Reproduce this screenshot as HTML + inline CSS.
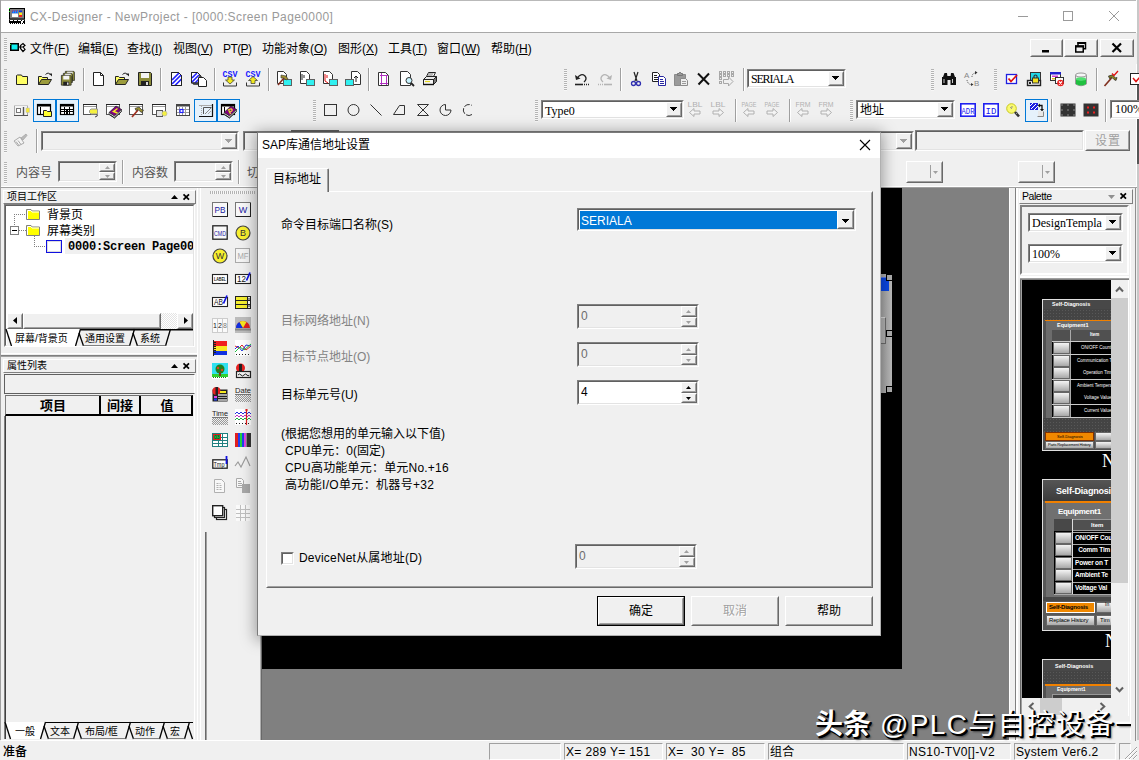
<!DOCTYPE html>
<html lang="zh-CN">
<head>
<meta charset="utf-8">
<title>CX-Designer</title>
<style>
*{box-sizing:border-box;margin:0;padding:0}
html,body{width:1139px;height:760px;overflow:hidden;background:#f0f0f0}
body{position:relative;font-family:"Liberation Sans","Noto Sans CJK SC",sans-serif;font-size:12px;color:#000}
.a{position:absolute}
.t{position:absolute;white-space:nowrap;line-height:16px}
u{text-decoration:underline;text-underline-offset:1px}
.sunk{position:absolute;border:1px solid;border-color:#808080 #fff #fff #808080;background:#fff}
.sunk:before{content:"";position:absolute;left:0;top:0;right:0;bottom:0;border:1px solid;border-color:#606060 #e3e3e3 #e3e3e3 #606060}
.sunk.dis{background:#f0f0f0}
.btn3{position:absolute;background:#f0f0f0;border:1px solid;border-color:#fff #696969 #696969 #fff}
.btn3:before{content:"";position:absolute;left:0;top:0;right:0;bottom:0;border:1px solid;border-color:#f0f0f0 #a0a0a0 #a0a0a0 #f0f0f0}
.sep{position:absolute;width:2px;border-left:1px solid #a0a0a0;border-right:1px solid #fff}
.grip{position:absolute;width:3px;background:repeating-linear-gradient(to bottom,#b4b4b4 0,#b4b4b4 1px,#f8f8f8 1px,#f8f8f8 2px)}
.hl{position:absolute;background:#e5f1fb;border:1px solid #0078d7}
svg{position:absolute;overflow:visible}
</style>
</head>
<body>
<div class="a" style="left:0px;top:0px;width:1139px;height:32px;background:#fff"></div>
<div class="a" style="left:0px;top:32px;width:1139px;height:1px;background:#a8a8a8"></div>
<div class="a" style="left:0px;top:0px;width:1139px;height:1px;background:#b9b9b9"></div>
<div class="a" style="left:0px;top:0px;width:1px;height:760px;background:#a0a0a0"></div>
<div class="a" style="left:1136px;top:0px;width:1px;height:760px;background:#fff"></div>
<div class="a" style="left:1137px;top:0px;width:2px;height:760px;background:#c8c8c8"></div>
<div class="a" style="left:1137px;top:84px;width:2px;height:80px;background:#555"></div>
<svg style="left:9px;top:8px" width="16" height="16" viewBox="0 0 16 16" ><rect x="0" y="0" width="16" height="11.500" fill="#000"/><rect x="1" y="1" width="14" height="9.500" fill="#808080"/><rect x="3" y="2.500" width="6" height="3" fill="#1060ff"/><path d="M3 3h6" stroke="#f03030" stroke-dasharray="1 1"/><path d="M4 4h5" stroke="#30c0ff" stroke-dasharray="1 1"/><rect x="3" y="5.500" width="6" height="3.500" fill="#fff"/><rect x="10" y="2.500" width="3" height="2" fill="#1030e0"/><rect x="10" y="4.500" width="3" height="2.500" fill="#f8e820"/><rect x="10" y="7" width="3" height="2" fill="#f02020"/><rect x="0" y="0" width="1" height="1" fill="#20e020"/><rect x="0" y="3" width="1" height="1" fill="#20e020"/><rect x="0" y="11.500" width="16" height="4.500" fill="#000"/><path d="M1 12.500h14" stroke="#fff" stroke-dasharray="3 1"/><path d="M0 15.500h16" stroke="#fff" stroke-dasharray="1 1"/><rect x="12" y="13" width="2" height="2" fill="#fff"/></svg>
<div class="t" id="title" style="left:30px;top:9px;color:#9a9a9a;font-size:12px;letter-spacing:.39px">CX-Designer - NewProject - [0000:Screen Page0000]</div>
<svg style="left:1018px;top:10px" width="12" height="12" viewBox="0 0 12 12" ><path d="M0 6.500h10" stroke="#9a9a9a"/></svg>
<svg style="left:1063px;top:11px" width="12" height="12" viewBox="0 0 12 12" ><rect x=".500" y=".500" width="9" height="9" fill="none" stroke="#9a9a9a"/></svg>
<svg style="left:1109px;top:11px" width="12" height="12" viewBox="0 0 12 12" ><path d="M0 0l10 10M10 0l-10 10" stroke="#9a9a9a" stroke-width="1"/></svg>
<div class="a" style="left:1px;top:33px;width:1136px;height:31px;background:#f0f0f0"></div>
<div class="grip" style="left:4px;top:38px;height:23px"></div>
<svg style="left:10px;top:43px" width="16" height="10" viewBox="0 0 16 10" ><rect x=".75" y=".75" width="7.500" height="6.500" fill="#10f0f0" stroke="#000" stroke-width="1.500"/><rect x="0" y="1" width="1" height="1" fill="#20e020"/><path d="M9 4h1.500v-1.500l2.500-2 2 2-2 1.500zM10.500 4v1.500l2.500 3 2-2-2-2.500z" fill="#fff" stroke="#000" stroke-width="1.200"/></svg>
<div class="t" id="m0" style="left:30px;top:41px;font-size:12px">文件(<u>F</u>)</div>
<div class="t" id="m1" style="left:78px;top:41px;font-size:12px">编辑(<u>E</u>)</div>
<div class="t" id="m2" style="left:127px;top:41px;font-size:12px">查找(<u>I</u>)</div>
<div class="t" id="m3" style="left:173px;top:41px;font-size:12px">视图(<u>V</u>)</div>
<div class="t" id="m4" style="left:223px;top:41px;font-size:12px;letter-spacing:-.6px">PT(<u>P</u>)</div>
<div class="t" id="m5" style="left:262px;top:41px;font-size:12px">功能对象(<u>O</u>)</div>
<div class="t" id="m6" style="left:338px;top:41px;font-size:12px">图形(<u>X</u>)</div>
<div class="t" id="m7" style="left:388px;top:41px;font-size:12px">工具(<u>T</u>)</div>
<div class="t" id="m8" style="left:437px;top:41px;font-size:12px">窗口(<u>W</u>)</div>
<div class="t" id="m9" style="left:491px;top:41px;font-size:12px">帮助(<u>H</u>)</div>
<div class="btn3 " style="left:1030px;top:39px;width:33px;height:18px;"></div>
<div class="btn3 " style="left:1064px;top:39px;width:34px;height:18px;"></div>
<div class="btn3 " style="left:1100px;top:39px;width:34px;height:18px;"></div>
<svg style="left:1042px;top:44px" width="12" height="10" viewBox="0 0 12 10" ><rect x="0" y="6" width="7" height="2.500" fill="#000"/></svg>
<svg style="left:1075px;top:42px" width="12" height="12" viewBox="0 0 12 12" ><rect x="3" y=".750" width="7.500" height="6" fill="none" stroke="#000" stroke-width="1.500"/><rect x=".750" y="4" width="7.500" height="6" fill="#f0f0f0" stroke="#000" stroke-width="1.500"/><rect x="0" y="3.500" width="9" height="2" fill="#000"/><rect x="2.500" y="0" width="8.500" height="2" fill="#000"/></svg>
<svg style="left:1112px;top:43px" width="10" height="10" viewBox="0 0 10 10" ><path d="M.5 .500l8.500 8.500M9 .500l-8.500 8.500" stroke="#000" stroke-width="2.200"/></svg>
<div class="grip" style="left:4px;top:69px;height:22px"></div>
<svg style="left:14px;top:71px" width="16" height="16" viewBox="0 0 16 16" ><path d="M2.5 4.5v9h11v-8h-5l-1-1.5h-4z" fill="#ffff66" stroke="#222"/></svg>
<svg style="left:37px;top:71px" width="16" height="16" viewBox="0 0 16 16" ><path d="M1.5 13.5v-8h3l1 1h5v2" fill="#ffff66" stroke="#222"/><path d="M1.5 13.5l3-5h10l-3 5z" fill="#9c9c3c" stroke="#222"/><path d="M8.5 3.5q3-3 5 0.5" fill="none" stroke="#222"/><path d="M12 2.5h3v3z" fill="#222"/></svg>
<svg style="left:60px;top:71px" width="16" height="16" viewBox="0 0 16 16" ><g transform="translate(5,0) scale(0.7)"><path d="M.5 .5h12l1 1v12h-13z" fill="#8c8c3a" stroke="#222"/><rect x="3" y="1" width="8" height="5" fill="#f4f4f4"/><rect x="3" y="9" width="8" height="5" fill="#222"/><rect x="8" y="10" width="2" height="3" fill="#ddd"/></g><g transform="translate(3,2) scale(0.7)"><path d="M.5 .5h12l1 1v12h-13z" fill="#8c8c3a" stroke="#222"/><rect x="3" y="1" width="8" height="5" fill="#f4f4f4"/><rect x="3" y="9" width="8" height="5" fill="#222"/><rect x="8" y="10" width="2" height="3" fill="#ddd"/></g><g transform="translate(1,4) scale(0.75)"><path d="M.5 .5h12l1 1v12h-13z" fill="#8c8c3a" stroke="#222"/><rect x="3" y="1" width="8" height="5" fill="#f4f4f4"/><rect x="3" y="9" width="8" height="5" fill="#222"/><rect x="8" y="10" width="2" height="3" fill="#ddd"/></g></svg>
<div class="sep" style="left:83px;top:68px;height:23px"></div>
<svg style="left:91px;top:71px" width="16" height="16" viewBox="0 0 16 16" ><path d="M2.5 1.5h7l3 3v10h-10z" fill="#fff" stroke="#222"/><path d="M9.5 1.5v3h3" fill="none" stroke="#222"/></svg>
<svg style="left:114px;top:71px" width="16" height="16" viewBox="0 0 16 16" ><path d="M1.5 13.5v-8h3l1 1h5v2" fill="#ffff66" stroke="#222"/><path d="M1.5 13.5l3-5h10l-3 5z" fill="#9c9c3c" stroke="#222"/><path d="M8.5 3.5q3-3 5 0.5" fill="none" stroke="#222"/><path d="M12 2.5h3v3z" fill="#222"/></svg>
<svg style="left:137px;top:71px" width="16" height="16" viewBox="0 0 16 16" ><g transform="translate(1,1) scale(1)"><path d="M.5 .5h12l1 1v12h-13z" fill="#8c8c3a" stroke="#222"/><rect x="3" y="1" width="8" height="5" fill="#f4f4f4"/><rect x="3" y="9" width="8" height="5" fill="#222"/><rect x="8" y="10" width="2" height="3" fill="#ddd"/></g></svg>
<div class="sep" style="left:160px;top:68px;height:23px"></div>
<svg style="left:168px;top:71px" width="16" height="16" viewBox="0 0 16 16" ><path d="M3.5 1.5h7l3 3v10h-10z" fill="#fff" stroke="#222"/><path d="M4 9l7-7M4 13l9-9M7 14.500l6.500-6.500" stroke="#2020ff" stroke-width="1.700"/><path d="M3.5 1.5h7l3 3v10h-10z" fill="none" stroke="#222"/></svg>
<svg style="left:191px;top:71px" width="16" height="16" viewBox="0 0 16 16" ><path d="M2.500 3.500h6l2 2v8h-8z" fill="#999" stroke="#555"/><path d=".500 1.500" /><path d="M.500 1.500h6l2.500 2.500v8h-8.500z" fill="#fff" stroke="#222"/><path d="M1 7l5-5M1 11l7-7M4 12l5-5" stroke="#2020ff" stroke-width="1.600"/><path d="M.500 1.500h6l2.500 2.500v8h-8.500z" fill="none" stroke="#222"/><path d="M7.500 6.500h5l3 3v6h-8z" fill="#fff" stroke="#222"/></svg>
<div class="sep" style="left:214px;top:68px;height:23px"></div>
<svg style="left:222px;top:71px" width="16" height="16" viewBox="0 0 16 16" ><text x="8" y="6" font-size="8.500" font-family="Liberation Mono,monospace" font-weight="bold" text-anchor="middle" fill="#1818ff" textLength="15" lengthAdjust="spacingAndGlyphs">CSV</text><path d="M6 6h4v3h2.500l-4.500 4-4.500-4h2.500z" fill="#f0e820" stroke="#333" stroke-width=".7"/><path d="M1.500 11.500v3.500h13v-3.500" fill="none" stroke="#333"/></svg>
<svg style="left:245px;top:71px" width="16" height="16" viewBox="0 0 16 16" ><text x="8" y="6" font-size="8.500" font-family="Liberation Mono,monospace" font-weight="bold" text-anchor="middle" fill="#1818ff" textLength="15" lengthAdjust="spacingAndGlyphs">CSV</text><path d="M6 12.500h4v-3h2.500l-4.500-4-4.500 4h2.500z" fill="#f0e820" stroke="#333" stroke-width=".7"/><path d="M1.500 11.500v3.500h13v-3.500" fill="none" stroke="#333"/></svg>
<div class="sep" style="left:268px;top:68px;height:23px"></div>
<svg style="left:276px;top:71px" width="16" height="16" viewBox="0 0 16 16" ><path d="M1.5 .5h6l3 3v9h-9z" fill="#fff" stroke="#333"/><rect x="7.5" y="8.5" width="8" height="6" fill="#30f0f0" stroke="#606060"/><path d="M2 14l6-7" stroke="#803020" stroke-width="1.6"/><path d="M5 4l5 1 2 3-2 1-2-2-3 0z" fill="#a09030" stroke="#333" stroke-width=".6"/></svg>
<svg style="left:299px;top:71px" width="16" height="16" viewBox="0 0 16 16" ><path d="M1.5 .5h6l3 3v9h-9z" fill="#fff" stroke="#333"/><path d="M3 3v6M5 4v3" stroke="#222"/><rect x="7.5" y="8.5" width="8" height="6" fill="#30f0f0" stroke="#606060"/></svg>
<svg style="left:322px;top:71px" width="16" height="16" viewBox="0 0 16 16" ><path d="M1.5 .5h6l3 3v9h-9z" fill="#fff" stroke="#333"/><path d="M3 3v7M5 4v3M3 10l3 2" stroke="#e01010"/><rect x="7.5" y="8.5" width="8" height="6" fill="#30f0f0" stroke="#606060"/></svg>
<svg style="left:345px;top:71px" width="16" height="16" viewBox="0 0 16 16" ><path d="M6.5 .5h6l3 3v10h-9z" fill="#fff" stroke="#333"/><path d="M11 11v-6m-2 2l2-2 2 2" stroke="#222" fill="none"/><rect x=".5" y="8.5" width="8" height="6" fill="#30f0f0" stroke="#606060"/></svg>
<div class="sep" style="left:368px;top:68px;height:23px"></div>
<svg style="left:376px;top:71px" width="16" height="16" viewBox="0 0 16 16" ><path d="M2.5 1.5h7l3 3v10h-10z" fill="#fff" stroke="#333"/><path d="M5.5 2v12M10.5 4v10M4 4.5h8M4 12.5h8" stroke="#b030c0" fill="none"/></svg>
<svg style="left:399px;top:71px" width="16" height="16" viewBox="0 0 16 16" ><path d="M1.5 .5h7l3 3v11h-10z" fill="#fff" stroke="#333"/><circle cx="10" cy="9.5" r="3" fill="#c8f4ff" stroke="#333"/><path d="M12 12l3 3" stroke="#222" stroke-width="1.8"/></svg>
<svg style="left:422px;top:71px" width="16" height="16" viewBox="0 0 16 16" ><path d="M4.500 5.500l2-4h7l-2 4z" fill="#fff" stroke="#222"/><path d="M6.500 2.500h5M6 3.500h5M5.500 4.500h5" stroke="#888" stroke-width=".6"/><path d="M1.500 8.500l3-3h10l-3 3z" fill="#e8e8e8" stroke="#222"/><path d="M1.500 8.500h10v5h-10z" fill="#f4f4f4" stroke="#222"/><path d="M11.500 8.500l3-3v5l-3 3z" fill="#777" stroke="#222"/><path d="M3 10.500h5" stroke="#e8d820" stroke-width="1.200"/><path d="M1 13.500h11" stroke="#111" stroke-width="1.400"/></svg>
<div class="grip" style="left:564px;top:69px;height:22px"></div>
<svg style="left:574px;top:71px" width="16" height="16" viewBox="0 0 16 16" ><path d="M3 7.500q4-6 8-2.500 2.500 3-1 6" fill="none" stroke="#222" stroke-width="1.3"/><path d="M1 4l1 5 4.500-1.500z" fill="#222"/><path d="M1 13.500h8" stroke="#222" stroke-width="1.6"/><path d="M10 13.500h5" stroke="#222" stroke-width="1.400" stroke-dasharray="1 1"/></svg>
<svg style="left:597px;top:71px" width="16" height="16" viewBox="0 0 16 16" ><path d="M13 7.500q-4-6-8-2.500-2.500 3 1 6" fill="none" stroke="#b4b4b4" stroke-width="1.3"/><path d="M15 4l-1 5-4.500-1.500z" fill="#b4b4b4"/><path d="M7 13.500h8" stroke="#b4b4b4" stroke-width="1.6"/><path d="M1 13.500h5" stroke="#b4b4b4" stroke-width="1.400" stroke-dasharray="1 1"/></svg>
<div class="sep" style="left:620px;top:68px;height:23px"></div>
<svg style="left:628px;top:71px" width="16" height="16" viewBox="0 0 16 16" ><path d="M6 1l3 9M10 1l-3 9" stroke="#222" stroke-width="1.2"/><circle cx="5.500" cy="12.500" r="2" fill="none" stroke="#3030b0" stroke-width="1.3"/><circle cx="10.500" cy="12.500" r="2" fill="none" stroke="#3030b0" stroke-width="1.3"/></svg>
<svg style="left:651px;top:71px" width="16" height="16" viewBox="0 0 16 16" ><path d="M1.500 1.500h5l2 2v7h-7z" fill="#fff" stroke="#222"/><path d="M3 4.500h3M3 6.500h4M3 8.500h4" stroke="#222"/><path d="M7.500 5.500h5l2 2v7h-7z" fill="#fff" stroke="#2828a0"/><path d="M9 8.500h3M9 10.500h4M9 12.500h4" stroke="#2828a0"/></svg>
<svg style="left:673px;top:71px" width="16" height="16" viewBox="0 0 16 16" ><path d="M1.500 3.500h11v11h-11z" fill="#9a9a9a" stroke="#8a8a8a"/><path d="M4.500 4.500v-2h1.500l1-1.500 1 1.500h1.500v2z" fill="#9a9a9a" stroke="#777"/><path d="M7.500 7.500h5l2 2v5h-7z" fill="#eee" stroke="#8a8a8a"/><path d="M9 10.500h4M9 12.500h4" stroke="#9a9a9a"/></svg>
<svg style="left:696px;top:71px" width="16" height="16" viewBox="0 0 16 16" ><path d="M2 2.500l11 11M13 2.500l-10.500 11" stroke="#111" stroke-width="2"/></svg>
<svg style="left:718px;top:71px" width="16" height="16" viewBox="0 0 16 16" ><rect x="1.5" y="0.5" width="2" height="2" fill="none" stroke="#a8a8a8"/><rect x="1.5" y="3.5" width="2" height="2" fill="none" stroke="#a8a8a8"/><rect x="5.5" y="0.5" width="2" height="2" fill="none" stroke="#a8a8a8"/><rect x="5.5" y="3.5" width="2" height="2" fill="none" stroke="#a8a8a8"/><rect x="9.5" y="0.5" width="2" height="2" fill="none" stroke="#a8a8a8"/><rect x="9.5" y="3.5" width="2" height="2" fill="none" stroke="#a8a8a8"/><rect x="13.5" y="0.5" width="2" height="2" fill="none" stroke="#a8a8a8"/><rect x="13.5" y="3.5" width="2" height="2" fill="none" stroke="#a8a8a8"/><rect x="1.500" y="6.500" width="2" height="2" fill="none" stroke="#a8a8a8"/><rect x="1.500" y="10.500" width="2" height="2" fill="none" stroke="#a8a8a8"/><path d="M5.500 8.500h5v-2.500l4.500 4.500-4.500 4.500v-2.500h-5z" fill="#f0f0f0" stroke="#a8a8a8"/></svg>
<div class="sep" style="left:743px;top:68px;height:23px"></div>
<div class="sunk " style="left:747px;top:69px;width:99px;height:19px;"></div>
<div class="btn3 " style="left:828px;top:71px;width:16px;height:15px;"></div>
<svg style="left:832px;top:76px" width="7" height="4" viewBox="0 0 7 4" shape-rendering="crispEdges"><path d="M0 0h7v1h-1v1h-1v1h-1v1h-1v-1h-1v-1h-1v-1h-1z" fill="#000"/></svg>
<div class="t" style="left:751px;top:71px;font-family:Liberation Serif,serif;font-size:12px;letter-spacing:-1.2px;left:751px">SERIALA</div>
<div class="grip" style="left:931px;top:69px;height:22px"></div>
<svg style="left:941px;top:71px" width="16" height="16" viewBox="0 0 16 16" ><path d="M2 6l1.500-4h2.500l.5 4zM14 6l-1.500-4h-2.500l-.5 4z" fill="#111"/><rect x="1" y="6" width="5.500" height="8" fill="#111"/><rect x="9.500" y="6" width="5.500" height="8" fill="#111"/><rect x="6" y="5" width="4" height="4" fill="#111"/><rect x="2.500" y="8" width="1" height="4" fill="#ccc"/><rect x="11" y="8" width="1" height="4" fill="#ccc"/></svg>
<svg style="left:964px;top:71px" width="16" height="16" viewBox="0 0 16 16" ><text x="0" y="7" font-size="8" font-family="Liberation Sans,sans-serif" fill="#888">A</text><text x="10" y="15" font-size="8" font-family="Liberation Sans,sans-serif" fill="#888">B</text><path d="M3 9q1 5 5 4.500" fill="none" stroke="#555" stroke-dasharray="1 1"/><path d="M7 12l2.500 1.500-2.500 1.500z" fill="#333"/><path d="M8 6q0-4 4-4" fill="none" stroke="#555" stroke-dasharray="1 1"/><path d="M11 0l2.500 1.500-2.500 2z" fill="#333"/></svg>
<div class="grip" style="left:994px;top:69px;height:22px"></div>
<svg style="left:1004px;top:71px" width="16" height="16" viewBox="0 0 16 16" ><rect x="2.500" y="3.500" width="10" height="9" fill="#fff" stroke="#2020e0" stroke-width="1.300"/><path d="M4.500 7.500l2.500 3 6-6.500" fill="none" stroke="#e01010" stroke-width="1.800"/></svg>
<svg style="left:1026px;top:71px" width="16" height="16" viewBox="0 0 16 16" ><rect x="4.500" y="1.500" width="10" height="8" fill="#20d8e8" stroke="#333"/><rect x="1.500" y="9.500" width="13" height="5" fill="#f4f4f4" stroke="#222" stroke-width="1.400"/><rect x="6.500" y="7" width="6" height="5" fill="#f0e020" stroke="#333"/><path d="M8 7v-2q1.500-2 3 0v2" fill="none" stroke="#333" stroke-width="1.200"/><rect x="3" y="11" width="2" height="2" fill="#222"/></svg>
<svg style="left:1049px;top:71px" width="16" height="16" viewBox="0 0 16 16" ><rect x="1.500" y="1.500" width="10" height="8" fill="#fff" stroke="#333"/><rect x="1" y="1" width="11" height="2.500" fill="#2020d0"/><rect x="3" y="4.500" width="6" height="1.500" fill="#d040d0"/><rect x="3" y="7" width="6" height="1.500" fill="#e0c020"/><rect x="6.500" y="6.500" width="8" height="6" fill="#fff" stroke="#333"/><rect x="6" y="6" width="9" height="2" fill="#2020d0" opacity=".0"/><circle cx="11.500" cy="12" r="3.300" fill="#e82020"/><path d="M10 10.500l3 3M13 10.500l-3 3" stroke="#fff" stroke-width="1.100"/></svg>
<svg style="left:1073px;top:71px" width="16" height="16" viewBox="0 0 16 16" ><path d="M2.500 4v9q5.500 3.500 11 0v-9" fill="#e8e8e8" stroke="#999"/><ellipse cx="8" cy="4" rx="5.500" ry="2" fill="#f6f6f6" stroke="#999"/><path d="M3 8v5q5 3 10 0v-5q-5 2.500-10 0z" fill="#20c040"/><ellipse cx="8" cy="8" rx="5" ry="1.700" fill="#50e070"/></svg>
<div class="sep" style="left:1096px;top:68px;height:23px"></div>
<svg style="left:1103px;top:71px" width="16" height="16" viewBox="0 0 16 16" ><path d="M1.500 15l7-8" stroke="#803020" stroke-width="1.700"/><path d="M5.500 5l4-1 3 3 1.500-.5-1 3-2-1-2-2-2.500 1z" fill="#8a8020" stroke="#222" stroke-width=".7"/><path d="M9 2.500l2 2 4-4.500" fill="none" stroke="#e01010" stroke-width="1.300"/></svg>
<svg style="left:1129px;top:71px" width="16" height="16" viewBox="0 0 16 16" ><rect x="1.500" y="2.500" width="12" height="11" fill="#fff" stroke="#222"/><path d="M4 7l3 3.500 8-9" fill="none" stroke="#e01010" stroke-width="1.500"/></svg>
<div class="grip" style="left:4px;top:100px;height:22px"></div>
<div class="hl" style="left:33px;top:99px;width:23px;height:23px"></div>
<div class="hl" style="left:56px;top:99px;width:23px;height:23px"></div>
<div class="hl" style="left:194px;top:99px;width:23px;height:23px"></div>
<div class="hl" style="left:217px;top:99px;width:23px;height:23px"></div>
<svg style="left:14px;top:102px" width="16" height="16" viewBox="0 0 16 16" ><rect x=".500" y="3.500" width="13" height="10" fill="#f4f4f4" stroke="#aaa"/><path d="M0 13.500h14" stroke="#555"/><path d="M0 3.500h14" stroke="#ccc"/><rect x="2.500" y="6.500" width="4" height="4" fill="#fff" stroke="#777"/><path d="M9.500 5v8" stroke="#555" stroke-width="1.400"/><rect x="12" y="6" width="3.500" height="4.500" fill="#f4e838" stroke="#bbb" stroke-width=".5"/></svg>
<svg style="left:37px;top:102px" width="16" height="16" viewBox="0 0 16 16" ><rect x=".500" y="2.500" width="13" height="10" fill="#fff" stroke="#000" stroke-width="1.200"/><rect x="0" y="2" width="14" height="2.500" fill="#000"/><path d="M3.500 5v7" stroke="#000"/><path d="M6.500 14.500v-6h3l1 1h4v5z" fill="#ffff30" stroke="#222"/></svg>
<svg style="left:60px;top:102px" width="16" height="16" viewBox="0 0 16 16" ><rect x=".500" y="2.500" width="13" height="10" fill="#fff" stroke="#000" stroke-width="1.200"/><rect x="0" y="2" width="14" height="2.500" fill="#000"/><path d="M1 7.500h12M1 9.500h12M4.500 5v7M9.500 5v7" stroke="#000" stroke-width="1"/><rect x="6" y="8" width="2" height="4" fill="#000"/></svg>
<svg style="left:83px;top:102px" width="16" height="16" viewBox="0 0 16 16" ><rect x=".500" y="2.500" width="13" height="10" fill="#fff" stroke="#555"/><path d="M0 2.500h14" stroke="#222"/><path d="M1 4.500h12" stroke="#999"/><path d="M6.500 8.500l1.500-1.500h6.500v5h-6.500l-1.500-1.500z" fill="#f4f040" stroke="#999"/><path d="M14 12q1.500 2.500-2 3" fill="none" stroke="#444"/></svg>
<svg style="left:106px;top:102px" width="16" height="16" viewBox="0 0 16 16" ><rect x=".500" y="2.500" width="13" height="10" fill="#fff" stroke="#555"/><path d="M0 2.500h14" stroke="#222"/><path d="M1 4.500h12" stroke="#999"/><path d="M3 10.500l7-6.500 5.500 3.500-7 6.500z" fill="#800080" stroke="#222" stroke-width=".7"/><path d="M3 10.500v2l5.500 3.500 7-6.500v-2l-7 6.500z" fill="#f4f4f4" stroke="#222" stroke-width=".7"/><path d="M3.500 12.500l5 3.300 7-6.500" fill="none" stroke="#222" stroke-width="1"/><path d="M11.500 6.500l-4 3 4 1.500" fill="none" stroke="#f8f020" stroke-width="1.500"/></svg>
<svg style="left:129px;top:102px" width="16" height="16" viewBox="0 0 16 16" ><rect x=".500" y="2.500" width="13" height="10" fill="#fff" stroke="#555"/><path d="M0 2.500h14" stroke="#222"/><path d="M1 4.500h12" stroke="#999"/><path d="M3 15l6-7" stroke="#a03020" stroke-width="1.700"/><path d="M6 6.500l4-1.500 3 3 1.500 0-1.500 2.500-2-1-2-2-2 1z" fill="#9a9030" stroke="#333" stroke-width=".7"/></svg>
<svg style="left:152px;top:102px" width="16" height="16" viewBox="0 0 16 16" ><rect x=".500" y="2.500" width="13" height="10" fill="#fff" stroke="#555"/><path d="M0 2.500h14" stroke="#222"/><path d="M1 4.500h12" stroke="#999"/><rect x="4.500" y="8.500" width="6" height="6" fill="#e4e4e4" stroke="#555"/><circle cx="12.500" cy="11.500" r="2.500" fill="#f4f040" stroke="#aaa" stroke-width=".6"/></svg>
<svg style="left:175px;top:102px" width="16" height="16" viewBox="0 0 16 16" ><rect x="1.500" y="2.500" width="13" height="11" fill="#fff" stroke="#444"/><rect x="1" y="2" width="14" height="2.500" fill="#444"/><path d="M2 7.500h12M2 10.500h12M4.500 5v8M7.500 5v8M10.500 5v8" stroke="#999"/><rect x="5" y="7.500" width="3" height="3" fill="#fff" stroke="#2020ff" stroke-width="1.200"/></svg>
<svg style="left:198px;top:102px" width="16" height="16" viewBox="0 0 16 16" ><path d="M1 3.500h13" stroke="#aaa"/><path d="M3.500 4v9" stroke="#aaa" stroke-dasharray="1 1"/><path d="M14.500 2v12.500h-13.500" fill="none" stroke="#111" stroke-width="1.200"/><path d="M5.500 12v-6.500h8" fill="none" stroke="#555"/><path d="M7 12l6-6" stroke="#888"/><path d="M10 12l3-3" stroke="#aaa"/></svg>
<svg style="left:221px;top:102px" width="16" height="16" viewBox="0 0 16 16" ><rect x=".500" y="2.500" width="13" height="10" fill="#fff" stroke="#000" stroke-width="1.200"/><rect x="0" y="2" width="14" height="2.500" fill="#000"/><path d="M3.500 5v7" stroke="#000"/><path d="M3 10.500l7-6.500 5.500 3.500-7 6.500z" fill="#800080" stroke="#222" stroke-width=".7"/><path d="M3 10.500v2l5.500 3.500 7-6.500v-2l-7 6.500z" fill="#f4f4f4" stroke="#222" stroke-width=".7"/><path d="M3.500 12.500l5 3.300 7-6.500" fill="none" stroke="#222" stroke-width="1"/><text x="7" y="12" font-size="7.500" font-weight="bold" font-family="Liberation Sans,sans-serif" fill="#f8f020" transform="rotate(-25 9 9)">P</text></svg>
<div class="grip" style="left:313px;top:100px;height:22px"></div>
<svg style="left:322px;top:102px" width="16" height="16" viewBox="0 0 16 16" ><rect x="2.500" y="2.500" width="12" height="11" fill="none" stroke="#333"/></svg>
<svg style="left:345px;top:102px" width="16" height="16" viewBox="0 0 16 16" ><circle cx="8.500" cy="8" r="5.500" fill="none" stroke="#333"/></svg>
<svg style="left:368px;top:102px" width="16" height="16" viewBox="0 0 16 16" ><path d="M2.500 2.500l11 11" stroke="#333"/></svg>
<svg style="left:391px;top:102px" width="16" height="16" viewBox="0 0 16 16" ><path d="M2.500 12.500l6-9h5v9z" fill="none" stroke="#333"/></svg>
<svg style="left:415px;top:102px" width="16" height="16" viewBox="0 0 16 16" ><path d="M2.500 2.500h11l-11 11h11z" fill="none" stroke="#333"/></svg>
<svg style="left:437px;top:102px" width="16" height="16" viewBox="0 0 16 16" ><path d="M8.500 8h5.500a5.500 5.500 0 1 1-5.500-5.500z" fill="none" stroke="#333"/></svg>
<svg style="left:460px;top:102px" width="16" height="16" viewBox="0 0 16 16" ><path d="M12 12.500a5.500 5.500 0 1 1 0-9" fill="none" stroke="#333" stroke-dasharray="6 1.500"/></svg>
<div class="grip" style="left:535px;top:100px;height:22px"></div>
<div class="sunk " style="left:541px;top:100px;width:143px;height:19px;"></div>
<div class="btn3 " style="left:666px;top:102px;width:16px;height:15px;"></div>
<svg style="left:670px;top:107px" width="7" height="4" viewBox="0 0 7 4" shape-rendering="crispEdges"><path d="M0 0h7v1h-1v1h-1v1h-1v1h-1v-1h-1v-1h-1v-1h-1z" fill="#000"/></svg>
<div class="t" style="left:545px;top:102px;font-family:Liberation Serif,serif;font-size:12px;left:545px;top:103px">Type0</div>
<svg style="left:687px;top:102px" width="16" height="16" viewBox="0 0 16 16" ><text x="8" y="5" font-size="6.500" font-family="Liberation Sans,sans-serif" fill="#b0b0b0" text-anchor="middle" textLength="15" lengthAdjust="spacingAndGlyphs">LBL</text><path d="M2.500 10.500l4.500-4v2.500h6v3h-6v2.500z" fill="#f4f4f4" stroke="#b0b0b0"/></svg>
<svg style="left:710px;top:102px" width="16" height="16" viewBox="0 0 16 16" ><text x="8" y="5" font-size="6.500" font-family="Liberation Sans,sans-serif" fill="#b0b0b0" text-anchor="middle" textLength="15" lengthAdjust="spacingAndGlyphs">LBL</text><path d="M13.500 10.500l-4.500-4v2.500h-6v3h6v2.500z" fill="#f4f4f4" stroke="#b0b0b0"/></svg>
<div class="sep" style="left:735px;top:99px;height:23px"></div>
<svg style="left:741px;top:102px" width="16" height="16" viewBox="0 0 16 16" ><text x="8" y="5" font-size="6.500" font-family="Liberation Sans,sans-serif" fill="#b0b0b0" text-anchor="middle" textLength="15" lengthAdjust="spacingAndGlyphs">PAGE</text><path d="M2.500 10.500l4.500-4v2.500h6v3h-6v2.500z" fill="#f4f4f4" stroke="#b0b0b0"/></svg>
<svg style="left:764px;top:102px" width="16" height="16" viewBox="0 0 16 16" ><text x="8" y="5" font-size="6.500" font-family="Liberation Sans,sans-serif" fill="#b0b0b0" text-anchor="middle" textLength="15" lengthAdjust="spacingAndGlyphs">PAGE</text><path d="M13.500 10.500l-4.500-4v2.500h-6v3h6v2.500z" fill="#f4f4f4" stroke="#b0b0b0"/></svg>
<div class="sep" style="left:789px;top:99px;height:23px"></div>
<svg style="left:795px;top:102px" width="16" height="16" viewBox="0 0 16 16" ><text x="8" y="5" font-size="6.500" font-family="Liberation Sans,sans-serif" fill="#b0b0b0" text-anchor="middle" textLength="15" lengthAdjust="spacingAndGlyphs">FRM</text><path d="M2.500 10.500l4.500-4v2.500h6v3h-6v2.500z" fill="#f4f4f4" stroke="#b0b0b0"/></svg>
<svg style="left:818px;top:102px" width="16" height="16" viewBox="0 0 16 16" ><text x="8" y="5" font-size="6.500" font-family="Liberation Sans,sans-serif" fill="#b0b0b0" text-anchor="middle" textLength="15" lengthAdjust="spacingAndGlyphs">FRM</text><path d="M13.500 10.500l-4.500-4v2.500h-6v3h6v2.500z" fill="#f4f4f4" stroke="#b0b0b0"/></svg>
<div class="grip" style="left:850px;top:100px;height:22px"></div>
<div class="sunk " style="left:856px;top:100px;width:99px;height:19px;"></div>
<div class="btn3 " style="left:937px;top:102px;width:16px;height:15px;"></div>
<svg style="left:941px;top:107px" width="7" height="4" viewBox="0 0 7 4" shape-rendering="crispEdges"><path d="M0 0h7v1h-1v1h-1v1h-1v1h-1v-1h-1v-1h-1v-1h-1z" fill="#000"/></svg>
<div class="t" style="left:860px;top:102px;font-size:12px;left:860px">地址</div>
<svg style="left:960px;top:102px" width="16" height="16" viewBox="0 0 16 16" ><rect x=".800" y="1.800" width="14.400" height="12.400" fill="#fff" stroke="#2020f0" stroke-width="1.600"/><text x="8" y="11.500" font-size="9" font-family="Liberation Mono,monospace" fill="#2020f0" text-anchor="middle" textLength="13" lengthAdjust="spacingAndGlyphs">ADR</text></svg>
<svg style="left:983px;top:102px" width="16" height="16" viewBox="0 0 16 16" ><rect x=".800" y="1.800" width="14.400" height="12.400" fill="#fff" stroke="#2020f0" stroke-width="1.600"/><text x="8" y="11.500" font-size="9" font-family="Liberation Mono,monospace" fill="#2020f0" text-anchor="middle">ID</text></svg>
<svg style="left:1005px;top:102px" width="16" height="16" viewBox="0 0 16 16" ><circle cx="6.500" cy="6.500" r="4.800" fill="#fafa70" stroke="#c8c820"/><path d="M5 6q1.500-2 3-1M6.500 7v-1.500" stroke="#888" fill="none" stroke-width=".8"/><path d="M10 10l4 4.500" stroke="#333" stroke-width="2.600"/><path d="M10.500 12.500l2-2" stroke="#999"/></svg>
<div class="hl" style="left:1025px;top:99px;width:23px;height:23px"></div>
<svg style="left:1029px;top:102px" width="16" height="16" viewBox="0 0 16 16" ><rect x="1" y="1" width="8" height="7" fill="#2020e0"/><path d="M2 7l5-5M5 8l4-4M1 4l3-3" stroke="#fff" stroke-width="1"/><path d="M9.500 3.500h3.500v4" fill="none" stroke="#111" stroke-width="1.300"/><path d="M11 7h4l-2 2.500z" fill="#111"/><path d="M11 1.500l-2 2 2 2z" fill="#111"/><path d="M14.500 9.500v5h-6" fill="none" stroke="#888"/><rect x="9" y="9" width="5" height="5" fill="#e8e8e8"/></svg>
<div class="sep" style="left:1051px;top:99px;height:23px"></div>
<svg style="left:1060px;top:102px" width="16" height="16" viewBox="0 0 16 16" ><rect x=".5" y="1.500" width="15" height="13" fill="#333"/><rect x="1.5" y="2.5" width="1" height="1" fill="#ddd"/><rect x="1.5" y="7.5" width="1" height="1" fill="#ddd"/><rect x="1.5" y="12.5" width="1" height="1" fill="#ddd"/><rect x="7.5" y="2.5" width="1" height="1" fill="#ddd"/><rect x="7.5" y="7.5" width="1" height="1" fill="#ddd"/><rect x="7.5" y="12.5" width="1" height="1" fill="#ddd"/><rect x="13.5" y="2.5" width="1" height="1" fill="#ddd"/><rect x="13.5" y="7.5" width="1" height="1" fill="#ddd"/><rect x="13.5" y="12.5" width="1" height="1" fill="#ddd"/></svg>
<svg style="left:1083px;top:102px" width="16" height="16" viewBox="0 0 16 16" ><rect x=".5" y="1.500" width="15" height="13" fill="#333"/><rect x="4" y="4.5" width="2" height="2" fill="#f02020"/><rect x="4" y="9.5" width="2" height="2" fill="#f02020"/><rect x="10" y="4.5" width="2" height="2" fill="#f02020"/><rect x="10" y="9.5" width="2" height="2" fill="#f02020"/></svg>
<div class="sep" style="left:1105px;top:99px;height:23px"></div>
<div class="sunk " style="left:1110px;top:100px;width:40px;height:19px;"></div>
<div class="t" style="left:1115px;top:101px;font-family:Liberation Serif,serif;font-size:12px">100%</div>
<div class="grip" style="left:4px;top:131px;height:22px"></div>
<svg style="left:12px;top:133px" width="16" height="16" viewBox="0 0 16 16" ><path d="M2 8l6-4 4 6-6 3z" fill="#f4f4f4" stroke="#aaa"/><path d="M9 5l5-4 1 1.500-4 4.500z" fill="#bbb" stroke="#999" stroke-width=".6"/><path d="M4 8.500l3 4M6 7.500l3 4" stroke="#aaa"/></svg>
<div class="sep" style="left:36px;top:129px;height:24px"></div>
<div class="sunk dis" style="left:41px;top:131px;width:198px;height:20px;"></div>
<div class="btn3 " style="left:221px;top:133px;width:16px;height:16px;"></div>
<svg style="left:225px;top:139px" width="7" height="4" viewBox="0 0 7 4" shape-rendering="crispEdges"><path d="M0 0h7v1h-1v1h-1v1h-1v1h-1v-1h-1v-1h-1v-1h-1z" fill="#a0a0a0"/></svg>
<div class="sunk dis" style="left:243px;top:131px;width:671px;height:20px;"></div>
<div class="btn3 " style="left:896px;top:133px;width:16px;height:16px;"></div>
<svg style="left:900px;top:139px" width="7" height="4" viewBox="0 0 7 4" shape-rendering="crispEdges"><path d="M0 0h7v1h-1v1h-1v1h-1v1h-1v-1h-1v-1h-1v-1h-1z" fill="#a0a0a0"/></svg>
<div class="sunk dis" style="left:915px;top:130px;width:169px;height:21px;"></div>
<div class="btn3 " style="left:1085px;top:130px;width:45px;height:21px;"><span class="t" style="left:9px;top:2px;font-size:12px;color:#a0a0a0;letter-spacing:1px">设置</span></div>
<div class="a" style="left:291px;top:130px;width:48px;height:2px;background:#606060"></div>
<div class="grip" style="left:4px;top:162px;height:22px"></div>
<div class="t" style="left:16px;top:165px;font-size:12px;color:#555">内容号</div>
<div class="sunk dis" style="left:58px;top:161px;width:59px;height:21px;"></div>
<div class="t" style="left:132px;top:165px;font-size:12px;color:#555">内容数</div>
<div class="sep" style="left:122px;top:160px;height:24px"></div>
<div class="sunk dis" style="left:174px;top:161px;width:59px;height:21px;"></div>
<div class="sep" style="left:238px;top:160px;height:24px"></div>
<div class="t" style="left:247px;top:165px;font-size:12px;color:#555">切</div>
<div class="btn3 " style="left:99px;top:163px;width:16px;height:9px;"></div>
<div class="btn3 " style="left:99px;top:172px;width:16px;height:8px;"></div>
<svg style="left:105px;top:166px" width="5" height="3" viewBox="0 0 5 3" ><path d="M0 3l2.500-3 2.500 3z" fill="#a0a0a0"/></svg>
<svg style="left:105px;top:175px" width="5" height="3" viewBox="0 0 5 3" ><path d="M0 0l2.500 3 2.500-3z" fill="#a0a0a0"/></svg>
<div class="btn3 " style="left:215px;top:163px;width:16px;height:9px;"></div>
<div class="btn3 " style="left:215px;top:172px;width:16px;height:8px;"></div>
<svg style="left:221px;top:166px" width="5" height="3" viewBox="0 0 5 3" ><path d="M0 3l2.500-3 2.500 3z" fill="#a0a0a0"/></svg>
<svg style="left:221px;top:175px" width="5" height="3" viewBox="0 0 5 3" ><path d="M0 0l2.500 3 2.500-3z" fill="#a0a0a0"/></svg>
<div class="btn3 " style="left:906px;top:161px;width:37px;height:22px;"></div>
<div class="a" style="left:930px;top:165px;width:1px;height:13px;background:#a0a0a0"></div>
<svg style="left:933px;top:171px" width="5" height="3" viewBox="0 0 5 3" ><path d="M0 0l2.500 3 2.500-3z" fill="#a0a0a0"/></svg>
<div class="btn3 " style="left:1018px;top:161px;width:37px;height:22px;"></div>
<div class="a" style="left:1042px;top:165px;width:1px;height:13px;background:#a0a0a0"></div>
<svg style="left:1045px;top:171px" width="5" height="3" viewBox="0 0 5 3" ><path d="M0 0l2.500 3 2.500-3z" fill="#a0a0a0"/></svg>
<div class="a" style="left:1px;top:186px;width:1136px;height:1px;background:#fff"></div>
<div class="a" style="left:1px;top:187px;width:1136px;height:1px;background:#a0a0a0"></div>
<div class="a" style="left:3px;top:190px;width:193px;height:14px;border:1px solid;border-color:#fff #808080 #808080 #fff;background:#f0f0f0"></div>
<div class="t" style="left:7px;top:189px;font-size:10px;">项目工作区</div>
<svg style="left:171px;top:195px" width="7" height="4" viewBox="0 0 7 4" ><path d="M0 4l3.500-4 3.500 4z" fill="#000"/></svg>
<svg style="left:183px;top:194px" width="7" height="6" viewBox="0 0 7 6" ><path d="M.500 .300l5.500 5.400M6 .300l-5.500 5.400" stroke="#000" stroke-width="1.700"/></svg>
<div class="sunk " style="left:4px;top:204px;width:191px;height:143px;"></div>
<div class="a" style="left:7px;top:206px;width:186px;height:107px;background:#fff"></div>
<div class="a" style="left:14px;top:214px;width:12px;height:1px;background:repeating-linear-gradient(to right,#808080 0,#808080 1px,transparent 1px,transparent 2px)"></div>
<div class="a" style="left:14px;top:214px;width:1px;height:12px;background:repeating-linear-gradient(to bottom,#808080 0,#808080 1px,transparent 1px,transparent 2px)"></div>
<div class="a" style="left:19px;top:230px;width:7px;height:1px;background:repeating-linear-gradient(to right,#808080 0,#808080 1px,transparent 1px,transparent 2px)"></div>
<div class="a" style="left:34px;top:236px;width:1px;height:11px;background:repeating-linear-gradient(to bottom,#808080 0,#808080 1px,transparent 1px,transparent 2px)"></div>
<div class="a" style="left:34px;top:246px;width:12px;height:1px;background:repeating-linear-gradient(to right,#808080 0,#808080 1px,transparent 1px,transparent 2px)"></div>
<div class="a" style="left:10px;top:226px;width:9px;height:9px;border:1px solid #808080;background:#fff"></div>
<div class="a" style="left:12px;top:230px;width:5px;height:1px;background:#000"></div>
<svg style="left:26px;top:208px" width="14" height="12" viewBox="0 0 14 12" ><path d="M.500 11.500v-10h4.500l1 1.500h7.500v8.500z" fill="#ffff00" stroke="#808080"/><path d="M1.500 11v-8.500h3.500l1 1.500h7" fill="none" stroke="#fff"/></svg>
<svg style="left:26px;top:224px" width="14" height="12" viewBox="0 0 14 12" ><path d="M.500 11.500v-10h4.500l1 1.500h7.500v8.500z" fill="#ffff00" stroke="#808080"/><path d="M1.500 11v-8.500h3.500l1 1.500h7" fill="none" stroke="#fff"/></svg>
<div class="t" id="tr1" style="left:47px;top:207px;font-size:12px">背景页</div>
<div class="t" id="tr2" style="left:47px;top:223px;font-size:12px">屏幕类别</div>
<div class="a" style="left:65px;top:238px;width:128px;height:16px;background:#f0f0f0"></div>
<div class="a" style="left:46px;top:240px;width:16px;height:13px;border:1px solid #1010e0;background:#fff;box-shadow:inset 0 0 0 1px #ddd"></div>
<div class="a" style="left:65px;top:238px;width:128px;height:16px;overflow:hidden"><div class="t" id="tr3" style="left:3px;top:1px;font-family:Liberation Mono,monospace;font-weight:bold;font-size:12px;letter-spacing:-0.2px">0000:Screen Page0000</div></div>
<div class="a" style="left:7px;top:313px;width:186px;height:16px;background:#f0f0f0"></div>
<div class="btn3 " style="left:7px;top:313px;width:16px;height:16px;"></div>
<div class="btn3 " style="left:177px;top:313px;width:16px;height:16px;"></div>
<div class="btn3 " style="left:23px;top:313px;width:138px;height:16px;"></div>
<div class="a" style="left:161px;top:313px;width:16px;height:16px;background:repeating-conic-gradient(#fff 0 25%,#e4e4e4 0 50%) 0 0/2px 2px"></div>
<svg style="left:13px;top:317px" width="4" height="7" viewBox="0 0 4 7" ><path d="M4 0v7l-4-3.500z" fill="#000"/></svg>
<svg style="left:184px;top:317px" width="4" height="7" viewBox="0 0 4 7" ><path d="M0 0v7l4-3.500z" fill="#000"/></svg>
<div class="a" style="left:7px;top:329px;width:186px;height:17px;background:#f0f0f0"></div>
<svg style="left:7px;top:329px" width="186" height="17" viewBox="0 0 186 17" ><path d="M-1 0l5.500 17H68.5L73.5 0z" fill="#fff"/><path d="M73.5 0.75H186" stroke="#000" stroke-width="1.5"/><path d="M-1 0l5.500 17" stroke="#000" stroke-width="1.300" fill="none"/><path d="M73.5 0l-5 17" stroke="#000" stroke-width="1.300" fill="none"/><path d="M72 4l4.500 13" stroke="#000" stroke-width="1.300" fill="none"/><path d="M127.5 0l-5 17" stroke="#000" stroke-width="1.300" fill="none"/><path d="M126 4l4.500 13" stroke="#000" stroke-width="1.300" fill="none"/><path d="M163.5 0l-5 17" stroke="#000" stroke-width="1.300" fill="none"/><path d="M76.5 16.500H122.5" stroke="#808080"/><path d="M130.5 16.500H158.5" stroke="#808080"/></svg>
<div class="t" style="left:15px;top:331px;font-size:10px;line-height:16px">屏幕/背景页</div>
<div class="t" style="left:85px;top:331px;font-size:10px;line-height:16px">通用设置</div>
<div class="t" style="left:140px;top:331px;font-size:10px;line-height:16px">系统</div>
<div class="a" style="left:5px;top:346px;width:190px;height:1px;background:#fff"></div>
<div class="a" style="left:1px;top:353px;width:197px;height:1px;background:#fff"></div>
<div class="a" style="left:1px;top:355px;width:197px;height:1px;background:#808080"></div>
<div class="a" style="left:1px;top:356px;width:197px;height:1px;background:#a0a0a0"></div>
<div class="a" style="left:3px;top:359px;width:193px;height:14px;border:1px solid;border-color:#fff #808080 #808080 #fff;background:#f0f0f0"></div>
<div class="t" style="left:7px;top:358px;font-size:10px;">属性列表</div>
<svg style="left:171px;top:364px" width="7" height="4" viewBox="0 0 7 4" ><path d="M0 4l3.500-4 3.500 4z" fill="#000"/></svg>
<svg style="left:183px;top:363px" width="7" height="6" viewBox="0 0 7 6" ><path d="M.500 .300l5.500 5.400M6 .300l-5.500 5.400" stroke="#000" stroke-width="1.700"/></svg>
<div class="a" style="left:4px;top:374px;width:191px;height:20px;border:1px solid;border-color:#606060 #fff #606060 #606060;background:#f0f0f0"></div>
<div class="a" style="left:5px;top:395px;width:188px;height:21px;border:solid;border-color:#707070 #000 #000 #808080;border-width:1px 2px 2px 1px;background:#f0f0f0"></div>
<div class="a" style="left:99px;top:396px;width:2px;height:19px;background:#000"></div>
<div class="a" style="left:139px;top:396px;width:2px;height:19px;background:#000"></div>
<div class="t" style="left:23px;top:398px;width:60px;text-align:center;font-size:13px;font-weight:bold">项目</div>
<div class="t" style="left:90px;top:398px;width:60px;text-align:center;font-size:13px;font-weight:bold">间接</div>
<div class="t" style="left:137px;top:398px;width:60px;text-align:center;font-size:13px;font-weight:bold">值</div>
<div class="a" style="left:4px;top:416px;width:1px;height:323px;background:#808080"></div>
<div class="a" style="left:5px;top:416px;width:1px;height:323px;background:#404040"></div>
<div class="a" style="left:194px;top:396px;width:1px;height:343px;background:#fff"></div>
<div class="a" style="left:7px;top:722px;width:186px;height:17px;background:#f0f0f0"></div>
<svg style="left:7px;top:722px" width="186" height="17" viewBox="0 0 186 17" ><path d="M-2 0l5.500 17H33.5L38.5 0z" fill="#fff"/><path d="M38.5 0.5H186" stroke="#000" stroke-width="1"/><path d="M-2 0l5.500 17" stroke="#000" stroke-width="1.300" fill="none"/><path d="M38.5 0l-5 17" stroke="#000" stroke-width="1.300" fill="none"/><path d="M37 4l4.500 13" stroke="#000" stroke-width="1.300" fill="none"/><path d="M71.5 0l-5 17" stroke="#000" stroke-width="1.300" fill="none"/><path d="M70 4l4.500 13" stroke="#000" stroke-width="1.300" fill="none"/><path d="M123.5 0l-5 17" stroke="#000" stroke-width="1.300" fill="none"/><path d="M122 4l4.500 13" stroke="#000" stroke-width="1.300" fill="none"/><path d="M157.5 0l-5 17" stroke="#000" stroke-width="1.300" fill="none"/><path d="M156 4l4.500 13" stroke="#000" stroke-width="1.300" fill="none"/><path d="M182.5 0l-5 17" stroke="#000" stroke-width="1.300" fill="none"/><path d="M181 4l4.500 13" stroke="#000" stroke-width="1.300" fill="none"/><path d="M41.5 16.500H66.5" stroke="#808080"/><path d="M74.5 16.500H118.5" stroke="#808080"/><path d="M126.5 16.500H152.5" stroke="#808080"/><path d="M160.5 16.500H177.5" stroke="#808080"/></svg>
<div class="t" style="left:15px;top:724px;font-size:10px;line-height:16px">一般</div>
<div class="t" style="left:50px;top:724px;font-size:10px;line-height:16px">文本</div>
<div class="t" style="left:85px;top:724px;font-size:10px;line-height:16px">布局/框</div>
<div class="t" style="left:135px;top:724px;font-size:10px;line-height:16px">动作</div>
<div class="t" style="left:170px;top:724px;font-size:10px;line-height:16px">宏</div>
<div class="a" style="left:197px;top:188px;width:1px;height:553px;background:#fff"></div>
<div class="a" style="left:200px;top:188px;width:1px;height:553px;background:#fff"></div>
<div class="a" style="left:205px;top:532px;width:1px;height:208px;background:#696969"></div>
<div class="a" style="left:206px;top:532px;width:1px;height:208px;background:#a0a0a0"></div>
<div class="a" style="left:210px;top:191px;width:45px;height:3px;background:repeating-linear-gradient(to right,#b4b4b4 0,#b4b4b4 1px,#f8f8f8 1px,#f8f8f8 2px)"></div>
<svg style="left:212px;top:202px" width="16" height="16" viewBox="0 0 16 16" ><rect x=".500" y=".500" width="15" height="14" fill="#f8f8f8" stroke="#777"/><path d="M1 14.500h15M15.500 1v14" stroke="#222"/><text x="8" y="11" font-size="9" font-family="Liberation Sans,sans-serif" font-weight="normal" fill="#2020a0" text-anchor="middle" textLength="11" lengthAdjust="spacingAndGlyphs">PB</text></svg>
<svg style="left:235px;top:202px" width="16" height="16" viewBox="0 0 16 16" ><rect x=".500" y=".500" width="15" height="14" fill="#f8f8f8" stroke="#777"/><path d="M1 14.500h15M15.500 1v14" stroke="#222"/><text x="8" y="11" font-size="9" font-family="Liberation Sans,sans-serif" font-weight="normal" fill="#2020a0" text-anchor="middle">W</text></svg>
<svg style="left:212px;top:225px" width="16" height="16" viewBox="0 0 16 16" ><rect x=".800" y=".800" width="14.400" height="13.400" fill="#f8f8f8" stroke="#222" stroke-width="1.300"/><text x="8" y="10.5" font-size="8" font-family="Liberation Sans,sans-serif" font-weight="normal" fill="#2020a0" text-anchor="middle" textLength="12" lengthAdjust="spacingAndGlyphs">CMD</text></svg>
<svg style="left:235px;top:225px" width="16" height="16" viewBox="0 0 16 16" ><circle cx="8" cy="8" r="7" fill="#f8f030" stroke="#444" stroke-width="1.200"/><text x="8" y="11.2" font-size="9" font-family="Liberation Sans,sans-serif" font-weight="normal" fill="#333" text-anchor="middle">B</text></svg>
<svg style="left:212px;top:248px" width="16" height="16" viewBox="0 0 16 16" ><circle cx="8" cy="8" r="7" fill="#f8f030" stroke="#444" stroke-width="1.200"/><text x="8" y="11.2" font-size="9" font-family="Liberation Sans,sans-serif" font-weight="normal" fill="#333" text-anchor="middle">W</text></svg>
<svg style="left:235px;top:248px" width="16" height="16" viewBox="0 0 16 16" ><rect x=".500" y=".500" width="14" height="14" fill="#f4f4f4" stroke="#aaa"/><text x="8" y="11" font-size="9" font-family="Liberation Sans,sans-serif" font-weight="normal" fill="#aaa" text-anchor="middle" textLength="11" lengthAdjust="spacingAndGlyphs">MF</text></svg>
<svg style="left:212px;top:271px" width="16" height="16" viewBox="0 0 16 16" ><rect x=".500" y="3.500" width="15" height="9" fill="#fff" stroke="#222" stroke-width="1.100"/><text x="8" y="10" font-size="5.5" font-family="Liberation Sans,sans-serif" font-weight="bold" fill="#111" text-anchor="middle" textLength="12" lengthAdjust="spacingAndGlyphs">LABEL</text></svg>
<svg style="left:235px;top:271px" width="16" height="16" viewBox="0 0 16 16" ><rect x=".500" y="3.500" width="15" height="9" fill="#fff" stroke="#222" stroke-width="1.100"/><text x="6.500" y="11" font-size="8.5" font-family="Liberation Sans,sans-serif" font-weight="normal" fill="#111" text-anchor="middle" textLength="9" lengthAdjust="spacingAndGlyphs">12</text><path d="M11.500 9.500l3.500-8" stroke="#1010e0" stroke-width="1.800"/></svg>
<svg style="left:212px;top:294px" width="16" height="16" viewBox="0 0 16 16" ><rect x=".500" y="3.500" width="15" height="9" fill="#fff" stroke="#222" stroke-width="1.100"/><text x="6.500" y="11" font-size="8.5" font-family="Liberation Sans,sans-serif" font-weight="normal" fill="#111" text-anchor="middle" textLength="9" lengthAdjust="spacingAndGlyphs">AB</text><path d="M11.500 9.500l3.500-8" stroke="#1010e0" stroke-width="1.800"/></svg>
<svg style="left:235px;top:294px" width="16" height="16" viewBox="0 0 16 16" ><rect x=".500" y="2.500" width="15" height="12" fill="#fff" stroke="#222"/><rect x="1" y="3" width="11" height="3" fill="#f4ee30"/><rect x="1" y="7" width="11" height="3" fill="#f4ee30"/><rect x="1" y="11" width="11" height="3" fill="#f4ee30"/><path d="M1 6.500h14M1 10.500h14M12.500 3v11" stroke="#222"/><path d="M13 5.500l1-2 1 2zM13 11.500l1 2 1-2z" fill="#222"/></svg>
<svg style="left:212px;top:317px" width="16" height="16" viewBox="0 0 16 16" ><rect x=".500" y="1.500" width="15" height="14" fill="#fafafa" stroke="#ccc"/><path d="M5.500 2v13M10.500 2v13" stroke="#ccc"/><text x="3" y="11" font-size="7" font-family="Liberation Sans,sans-serif" font-weight="normal" fill="#111" text-anchor="middle">1</text><text x="8" y="11" font-size="7" font-family="Liberation Sans,sans-serif" font-weight="normal" fill="#111" text-anchor="middle">2</text><text x="13" y="11" font-size="7" font-family="Liberation Sans,sans-serif" font-weight="normal" fill="#777" text-anchor="middle">8</text></svg>
<svg style="left:235px;top:317px" width="16" height="16" viewBox="0 0 16 16" ><rect x="0" y="0" width="16" height="16" fill="#bcbcbc"/><path d="M1 11a7 7 0 0 1 14 0z" fill="#e02020"/><path d="M1 11a7 7 0 0 1 3.500-6l3.500 6z" fill="#1030e0"/><path d="M8 11l-3.500-6a7 7 0 0 1 7 0z" fill="#f4e820"/><rect x="0" y="11.500" width="16" height="2" fill="#888"/></svg>
<svg style="left:212px;top:340px" width="16" height="16" viewBox="0 0 16 16" ><rect x="2" y="1" width="13" height="5" fill="#f02020"/><rect x="2" y="6" width="13" height="5" fill="#f8e820"/><rect x="2" y="11" width="13" height="4" fill="#1030e0"/><path d="M1.500 0v16" stroke="#222"/><path d="M2 2.500h2M2 4.500h2M2 6.500h2M2 8.500h2M2 10.500h2M2 12.500h2" stroke="#222"/></svg>
<svg style="left:235px;top:340px" width="16" height="16" viewBox="0 0 16 16" ><rect x="0" y="0" width="16" height="16" fill="#fff"/><path d="M0 6l4 2 3-3 4 5 5-4" fill="none" stroke="#e02020"/><path d="M0 9l3-3 4 5 4-6 5 1" fill="none" stroke="#2030e0"/><path d="M0 12l5-5 4 3 7-6" fill="none" stroke="#20c040"/><path d="M1 14.500h14" stroke="#222" stroke-dasharray="1 2"/></svg>
<svg style="left:212px;top:363px" width="16" height="16" viewBox="0 0 16 16" ><rect x="0" y="0" width="16" height="16" fill="#30e0f0"/><rect x="0" y="11" width="16" height="3" fill="#30d030"/><rect x="0" y="14" width="16" height="2" fill="#fff"/><circle cx="8" cy="6" r="4.500" fill="#208020"/><circle cx="6" cy="5" r="1.200" fill="#e04020"/><circle cx="10" cy="7" r="1.200" fill="#e04020"/><rect x="7" y="9" width="2" height="4" fill="#704020"/><path d="M1 14.500h14" stroke="#208020" stroke-dasharray="1 1"/></svg>
<svg style="left:235px;top:363px" width="16" height="16" viewBox="0 0 16 16" ><circle cx="5.500" cy="5" r="4.500" fill="#e82020"/><rect x="4" y="1" width="3" height="9" fill="#222"/><rect x="1.500" y="8.500" width="14" height="6" fill="#f4f4f4" stroke="#222" stroke-width="1.200"/><path d="M3 12q1.500-2 3 0t3 0 3 0 2 0" fill="none" stroke="#222"/></svg>
<svg style="left:212px;top:386px" width="16" height="16" viewBox="0 0 16 16" ><rect x=".500" y="3.500" width="15" height="12" fill="#222"/><circle cx="4.500" cy="5" r="4" fill="#e82020"/><rect x="3.500" y="1" width="2.500" height="8" fill="#222"/><rect x="8" y="5" width="6" height="2" fill="#f4e820"/><rect x="2" y="10" width="3" height="2" fill="#e040e0"/><rect x="2" y="12.500" width="3" height="2" fill="#2040f0"/><rect x="6" y="8" width="9" height="7" fill="#ddd" opacity=".7"/><path d="M6 10.500h9M6 12.500h9" stroke="#222"/></svg>
<svg style="left:235px;top:386px" width="16" height="16" viewBox="0 0 16 16" ><rect x="0" y="8" width="16" height="8" fill="#eee"/><path d="M0 8.5h16" stroke="#999" stroke-dasharray="1 1"/><path d="M1 9.5h16" stroke="#999" stroke-dasharray="1 1"/><path d="M0 10.5h16" stroke="#999" stroke-dasharray="1 1"/><path d="M1 11.5h16" stroke="#999" stroke-dasharray="1 1"/><path d="M0 12.5h16" stroke="#999" stroke-dasharray="1 1"/><path d="M1 13.5h16" stroke="#999" stroke-dasharray="1 1"/><path d="M0 14.5h16" stroke="#999" stroke-dasharray="1 1"/><path d="M1 15.5h16" stroke="#999" stroke-dasharray="1 1"/><text x="8" y="6.5" font-size="7.5" font-family="Liberation Sans,sans-serif" font-weight="normal" fill="#222" text-anchor="middle" textLength="16" lengthAdjust="spacingAndGlyphs">Date</text><path d="M0 8.500h16" stroke="#777"/></svg>
<svg style="left:212px;top:409px" width="16" height="16" viewBox="0 0 16 16" ><rect x="0" y="8" width="16" height="8" fill="#eee"/><path d="M0 8.5h16" stroke="#999" stroke-dasharray="1 1"/><path d="M1 9.5h16" stroke="#999" stroke-dasharray="1 1"/><path d="M0 10.5h16" stroke="#999" stroke-dasharray="1 1"/><path d="M1 11.5h16" stroke="#999" stroke-dasharray="1 1"/><path d="M0 12.5h16" stroke="#999" stroke-dasharray="1 1"/><path d="M1 13.5h16" stroke="#999" stroke-dasharray="1 1"/><path d="M0 14.5h16" stroke="#999" stroke-dasharray="1 1"/><path d="M1 15.5h16" stroke="#999" stroke-dasharray="1 1"/><text x="8" y="6.5" font-size="7.5" font-family="Liberation Sans,sans-serif" font-weight="normal" fill="#222" text-anchor="middle" textLength="16" lengthAdjust="spacingAndGlyphs">Time</text><path d="M0 8.500h16" stroke="#777"/></svg>
<svg style="left:235px;top:409px" width="16" height="16" viewBox="0 0 16 16" ><rect x="0" y="0" width="16" height="16" fill="#fff"/><path d="M0 5l2-2 2 2 2-2 2 2 2-2 2 2 2-2 2 2" fill="none" stroke="#2030e0"/><path d="M0 8l2-2 2 2 2-2 2 2 2-2 2 2 2-2 2 2" fill="none" stroke="#c030c0"/><path d="M0 11l2-2 2 2 2-2 2 2 2-2 2 2 2-2 2 2" fill="none" stroke="#20b040"/><path d="M11.500 0v16M10 1h3" stroke="#e02020" stroke-width="1.200"/><path d="M1 14.500h14" stroke="#222" stroke-dasharray="1 2"/></svg>
<svg style="left:212px;top:432px" width="16" height="16" viewBox="0 0 16 16" ><rect x=".500" y="1.500" width="15" height="13" fill="#fff" stroke="#208080"/><path d="M1 5.500h14M1 8.500h14M1 11.500h14M6.500 2v12M10.500 2v12" stroke="#208080"/><rect x="1" y="2" width="8" height="6" fill="#e02020"/><rect x="2" y="3" width="6" height="4" fill="#20c040"/><text x="5" y="6.8" font-size="5" font-family="Liberation Sans,sans-serif" font-weight="normal" fill="#111" text-anchor="middle">03</text></svg>
<svg style="left:235px;top:432px" width="16" height="16" viewBox="0 0 16 16" ><rect x="0" y="1" width="3" height="14" fill="#e02020"/><rect x="3" y="1" width="2" height="14" fill="#2040f0"/><rect x="5" y="1" width="2" height="14" fill="#20d040"/><rect x="7" y="1" width="2" height="14" fill="#2040f0"/><rect x="9" y="1" width="2" height="14" fill="#e040e0"/><rect x="11" y="1" width="1" height="14" fill="#888"/><rect x="12" y="1" width="4" height="14" fill="#333"/></svg>
<svg style="left:212px;top:455px" width="16" height="16" viewBox="0 0 16 16" ><rect x=".800" y="4.800" width="14.400" height="8.400" fill="#fff" stroke="#222" stroke-width="1.300"/><text x="7" y="11.5" font-size="8" font-family="Liberation Sans,sans-serif" font-weight="normal" fill="#111" text-anchor="middle" textLength="11" lengthAdjust="spacingAndGlyphs">Tmp</text><path d="M14.500 1v8" stroke="#1010e0" stroke-width="1.800"/></svg>
<svg style="left:235px;top:455px" width="16" height="16" viewBox="0 0 16 16" ><path d="M0 11l3-4 3 5 5-10 4 9" fill="none" stroke="#9a9a9a" stroke-width="1.100"/></svg>
<svg style="left:212px;top:478px" width="16" height="16" viewBox="0 0 16 16" ><path d="M2.500 1.500h7l3 3v10h-10z" fill="#f8f8f8" stroke="#b0b0b0"/><path d="M4.500 5.500h4M4.500 7.500h6M4.500 9.500h6M4.500 11.500h6" stroke="#b0b0b0" stroke-dasharray="2 1"/></svg>
<svg style="left:235px;top:478px" width="16" height="16" viewBox="0 0 16 16" ><path d="M1.500 .500h5l2 2v7h-7z" fill="#f8f8f8" stroke="#aaa"/><path d="M3 3.500h3M3 5.500h4M3 7.500h4" stroke="#aaa"/><rect x="7" y="6" width="8" height="9" fill="#a8a8a8"/></svg>
<svg style="left:212px;top:505px" width="16" height="16" viewBox="0 0 16 16" ><rect x="4.500" y="4.500" width="10" height="10" fill="#fff" stroke="#222" stroke-width="1.200"/><rect x="2.500" y="2.500" width="10" height="10" fill="#fff" stroke="#222" stroke-width="1.200"/><rect x=".700" y=".700" width="10" height="10" fill="#fff" stroke="#222" stroke-width="1.400"/></svg>
<svg style="left:235px;top:505px" width="16" height="16" viewBox="0 0 16 16" ><rect x="1" y="0" width="14" height="16" fill="#fafafa"/><path d="M5.500 0v16M10.500 0v16M1 4.500h14M1 8.500h14M1 12.500h14" stroke="#c0c0c0"/></svg>
<div class="a" style="left:262px;top:188px;width:748px;height:553px;background:#808080"></div>
<div class="a" style="left:262px;top:188px;width:640px;height:481px;background:#000"></div>
<div class="a" style="left:880px;top:274px;width:12px;height:119px;background:linear-gradient(to right,#a8a8a8,#bcbcbc)"></div>
<div class="a" style="left:880px;top:277px;width:9px;height:14px;background:#0a48e8;border-top:1px solid #6080f0"></div>
<div class="a" style="left:880px;top:317px;width:6px;height:27px;background:#b8b8b8;border:1px solid;border-color:#e0e0e0 #707070 #707070 #e0e0e0;border-left:none"></div>
<div class="a" style="left:886px;top:274px;width:7px;height:7px;background:#b0b0b0;border:1px solid #000"></div>
<div class="a" style="left:886px;top:330px;width:7px;height:7px;background:#b0b0b0;border:1px solid #000"></div>
<div class="a" style="left:886px;top:386px;width:7px;height:7px;background:#b0b0b0;border:1px solid #000"></div>
<div class="a" style="left:260px;top:636px;width:1px;height:104px;background:#b0b0b0"></div>
<div class="a" style="left:261px;top:636px;width:1px;height:104px;background:#686868"></div>
<div class="a" style="left:1009px;top:188px;width:1px;height:553px;background:#fff"></div>
<div class="a" style="left:1010px;top:188px;width:4px;height:553px;background:#f0f0f0"></div>
<div class="a" style="left:1015px;top:188px;width:1px;height:553px;background:#808080"></div>
<div class="a" style="left:1016px;top:188px;width:2px;height:553px;background:#fff"></div>
<div class="a" style="left:0px;top:740px;width:1139px;height:20px;background:#f0f0f0"></div>
<div class="a" style="left:1px;top:740px;width:1136px;height:1px;background:#fff"></div>
<div class="t" id="st0" style="left:3px;top:744px;font-size:12px;font-weight:500">准备</div>
<div class="a" style="left:489px;top:743px;width:72px;height:17px;border:1px solid;border-color:#a0a0a0 #fff #fff #a0a0a0"></div>
<div class="a" style="left:564px;top:743px;width:99px;height:17px;border:1px solid;border-color:#a0a0a0 #fff #fff #a0a0a0"></div>
<div class="t" id="st1" style="left:566px;top:744px;font-size:12px;white-space:pre;letter-spacing:.35px">X= 289 Y= 151</div>
<div class="a" style="left:666px;top:743px;width:99px;height:17px;border:1px solid;border-color:#a0a0a0 #fff #fff #a0a0a0"></div>
<div class="t" id="st2" style="left:668px;top:744px;font-size:12px;white-space:pre;letter-spacing:.35px">X=  30 Y=  85</div>
<div class="a" style="left:768px;top:743px;width:136px;height:17px;border:1px solid;border-color:#a0a0a0 #fff #fff #a0a0a0"></div>
<div class="t" id="st3" style="left:770px;top:744px;font-size:12px;white-space:pre;letter-spacing:.35px">组合</div>
<div class="a" style="left:907px;top:743px;width:104px;height:17px;border:1px solid;border-color:#a0a0a0 #fff #fff #a0a0a0"></div>
<div class="t" id="st4" style="left:909px;top:744px;font-size:12px;white-space:pre;letter-spacing:.35px">NS10-TV0[]-V2</div>
<div class="a" style="left:1014px;top:743px;width:102px;height:17px;border:1px solid;border-color:#a0a0a0 #fff #fff #a0a0a0"></div>
<div class="t" id="st5" style="left:1016px;top:744px;font-size:12px;white-space:pre;letter-spacing:.35px">System Ver6.2</div>
<div class="a" style="left:1119px;top:743px;width:12px;height:17px;border:1px solid;border-color:#a0a0a0 #fff #fff #a0a0a0"></div>
<svg style="left:1124px;top:746px" width="13" height="13" viewBox="0 0 13 13" ><path d="M13 1l-12 12M13 5l-8 8M13 9l-4 4" stroke="#a0a0a0"/><path d="M13 2l-11 11M13 6l-7 7M13 10l-3 3" stroke="#fff"/></svg>
<div class="a" style="left:1018px;top:188px;width:119px;height:553px;background:#f0f0f0"></div>
<div class="a" style="left:1019px;top:189px;width:114px;height:15px;border:1px solid;border-color:#fff #808080 #808080 #fff;background:#f0f0f0"></div>
<div class="t" id="pal" style="left:1022px;top:188px;font-size:10.5px;letter-spacing:-0.45px">Palette</div>
<svg style="left:1108px;top:195px" width="7" height="4" viewBox="0 0 7 4" ><path d="M0 0h7l-3.500 4z" fill="#909090"/></svg>
<svg style="left:1120px;top:193px" width="7" height="6" viewBox="0 0 7 6" ><path d="M.500 .300l5.500 5.400M6 .300l-5.500 5.400" stroke="#000" stroke-width="1.700"/></svg>
<div class="a" style="left:1020px;top:205px;width:109px;height:70px;border:2px solid;border-color:#808080 #fff #fff #808080;background:#f0f0f0"></div>
<div class="sunk " style="left:1028px;top:213px;width:95px;height:19px;"></div>
<div class="btn3 " style="left:1105px;top:215px;width:16px;height:15px;"></div>
<svg style="left:1109px;top:220px" width="7" height="4" viewBox="0 0 7 4" shape-rendering="crispEdges"><path d="M0 0h7v1h-1v1h-1v1h-1v1h-1v-1h-1v-1h-1v-1h-1z" fill="#000"/></svg>
<div class="t" style="left:1032px;top:215px;font-family:Liberation Serif,serif;font-size:12px;left:1032px">DesignTempla</div>
<div class="sunk " style="left:1028px;top:244px;width:95px;height:19px;"></div>
<div class="btn3 " style="left:1105px;top:246px;width:16px;height:15px;"></div>
<svg style="left:1109px;top:251px" width="7" height="4" viewBox="0 0 7 4" shape-rendering="crispEdges"><path d="M0 0h7v1h-1v1h-1v1h-1v1h-1v-1h-1v-1h-1v-1h-1z" fill="#000"/></svg>
<div class="t" style="left:1032px;top:246px;font-family:Liberation Serif,serif;font-size:12px;left:1032px">100%</div>
<div class="a" style="left:1020px;top:276px;width:109px;height:2px;background:#fff"></div>
<div class="a" style="left:1020px;top:278px;width:109px;height:1px;background:#a0a0a0"></div>
<div class="a" style="left:1020px;top:279px;width:109px;height:1px;background:#808080"></div>
<div class="a" style="left:1020px;top:280px;width:1px;height:436px;background:#696969"></div>
<div class="a" style="left:1021px;top:280px;width:1px;height:436px;background:#a0a0a0"></div>
<div class="a" id="palview" style="left:1022px;top:280px;width:89px;height:418px;background:#000;overflow:hidden">
<div class="a" style="left:20px;top:19px;width:80px;height:152px;background:#505050;border:1px solid #e0e0e0"></div>
<div class="a" style="left:21px;top:20px;width:78px;height:9px;background:#484848"></div>
<div class="a" style="left:21px;top:29px;width:78px;height:11px;background:#444 radial-gradient(#585858 25%,transparent 30%) 0 0/3px 3px"></div>
<div class="t" style="left:30px;top:21px;font-size:5.5px;line-height:7.5px;color:#fff;font-weight:bold">Self-Diagnosis</div>
<div class="a" style="left:23px;top:40px;width:70px;height:1px;background:#f08000"></div>
<div class="a" style="left:24px;top:41px;width:70px;height:100px;background:#6c6c6c"></div>
<div class="t" style="left:35px;top:42px;font-size:5.5px;line-height:7.5px;color:#fff;font-weight:bold">Equipment1</div>
<div class="a" style="left:30px;top:50px;width:65px;height:87px;background:#000"></div>
<div class="a" style="left:30px;top:50px;width:65px;height:11px;background:#505050"></div>
<div class="t" style="left:68px;top:52px;font-size:4.5px;line-height:6.5px;color:#fff;font-weight:bold">Item</div>
<div class="a" style="left:30px;top:50px;width:18px;height:12px;background:#505050"></div>
<div class="a" style="left:48px;top:50px;width:1px;height:87px;background:#aaa"></div>
<div class="a" style="left:31px;top:62px;width:17px;height:12px;background:linear-gradient(#f4f4f4,#a8a8a8);border:1px solid #666"></div>
<div class="t" style="left:59px;top:65px;font-size:4.5px;line-height:6.5px;color:#fff;">ON/OFF Count</div>
<div class="a" style="left:31px;top:75px;width:17px;height:12px;background:linear-gradient(#f4f4f4,#a8a8a8);border:1px solid #666"></div>
<div class="t" style="left:55px;top:78px;font-size:4.5px;line-height:6.5px;color:#fff;">Communication Tim</div>
<div class="a" style="left:31px;top:87px;width:17px;height:12px;background:linear-gradient(#f4f4f4,#a8a8a8);border:1px solid #666"></div>
<div class="t" style="left:61px;top:90px;font-size:4.5px;line-height:6.5px;color:#fff;">Operation Time</div>
<div class="a" style="left:31px;top:100px;width:17px;height:12px;background:linear-gradient(#f4f4f4,#a8a8a8);border:1px solid #666"></div>
<div class="t" style="left:55px;top:103px;font-size:4.5px;line-height:6.5px;color:#fff;">Ambient Temperatu</div>
<div class="a" style="left:31px;top:112px;width:17px;height:12px;background:linear-gradient(#f4f4f4,#a8a8a8);border:1px solid #666"></div>
<div class="t" style="left:62px;top:115px;font-size:4.5px;line-height:6.5px;color:#fff;">Voltage Value</div>
<div class="a" style="left:31px;top:125px;width:17px;height:12px;background:linear-gradient(#f4f4f4,#a8a8a8);border:1px solid #666"></div>
<div class="t" style="left:62px;top:128px;font-size:4.5px;line-height:6.5px;color:#fff;">Current Value</div>
<div class="a" style="left:30px;top:61px;width:65px;height:1px;background:#ccc"></div>
<div class="a" style="left:30px;top:74px;width:65px;height:1px;background:#ccc"></div>
<div class="a" style="left:30px;top:99px;width:65px;height:1px;background:#ccc"></div>
<div class="a" style="left:30px;top:124px;width:65px;height:1px;background:#ccc"></div>
<div class="a" style="left:30px;top:137px;width:65px;height:1px;background:#ccc"></div>
<div class="a" style="left:21px;top:138px;width:78px;height:14px;background:#444 radial-gradient(#585858 25%,transparent 30%) 0 0/3px 3px"></div>
<div class="a" style="left:23px;top:152px;width:49px;height:9px;background:#f08800;border:1px solid #803000"></div>
<div class="t" style="left:35px;top:154px;font-size:4px;line-height:6px;color:#fff;color:#000">Self-Diagnosis</div>
<div class="a" style="left:73px;top:152px;width:30px;height:9px;background:linear-gradient(#f4f4f4,#a8a8a8);border:1px solid #666"></div>
<div class="a" style="left:23px;top:161px;width:49px;height:8px;background:linear-gradient(#f4f4f4,#a8a8a8);border:1px solid #666"></div>
<div class="t" style="left:26px;top:162px;font-size:4px;line-height:6px;color:#fff;color:#000;letter-spacing:-.2px">Parts Replacement History</div>
<div class="a" style="left:73px;top:161px;width:30px;height:8px;background:linear-gradient(#f4f4f4,#a8a8a8);border:1px solid #666"></div>
<div class="t" style="left:80px;top:171px;font-size:18px;line-height:20px;color:#fff;font-family:Liberation Serif,serif">N</div>
<div class="a" style="left:20px;top:199px;width:80px;height:152px;background:#585858;border:1px solid #e0e0e0"></div>
<div class="a" style="left:21px;top:200px;width:78px;height:21px;background:linear-gradient(#555,#3c3c3c)"></div>
<div class="t" style="left:34px;top:206px;font-size:9px;line-height:11px;color:#fff;font-weight:bold;letter-spacing:-.2px">Self-Diagnosis</div>
<div class="a" style="left:23px;top:221px;width:70px;height:2px;background:#f08000"></div>
<div class="a" style="left:24px;top:223px;width:70px;height:94px;background:#707070"></div>
<div class="t" style="left:36px;top:227px;font-size:8px;line-height:10px;color:#fff;font-weight:bold;letter-spacing:-.3px">Equipment1</div>
<div class="a" style="left:32px;top:239px;width:60px;height:76px;background:#000"></div>
<div class="a" style="left:32px;top:239px;width:60px;height:12px;background:#505050;border:1px solid #999"></div>
<div class="a" style="left:32px;top:239px;width:18px;height:12px;background:#484848"></div>
<div class="a" style="left:50px;top:239px;width:1px;height:76px;background:#ddd"></div>
<div class="t" style="left:69px;top:241px;font-size:6px;line-height:8px;color:#fff;font-weight:bold">Item</div>
<div class="a" style="left:33px;top:252px;width:17px;height:12px;background:linear-gradient(#f4f4f4,#a8a8a8);border:1px solid #666"></div>
<div class="a" style="left:51px;top:252px;width:40px;height:13px;border-top:1px solid #aaa"></div>
<div class="t" style="left:53px;top:254px;font-size:6.5px;line-height:8.5px;color:#fff;font-weight:bold;letter-spacing:-.2px">ON/OFF Cou</div>
<div class="a" style="left:33px;top:264px;width:17px;height:12px;background:linear-gradient(#f4f4f4,#a8a8a8);border:1px solid #666"></div>
<div class="a" style="left:51px;top:264px;width:40px;height:13px;border-top:1px solid #aaa"></div>
<div class="t" style="left:53px;top:266px;font-size:6.5px;line-height:8.5px;color:#fff;font-weight:bold;letter-spacing:-.2px">&nbsp;&nbsp;Comm Tim</div>
<div class="a" style="left:33px;top:277px;width:17px;height:12px;background:linear-gradient(#f4f4f4,#a8a8a8);border:1px solid #666"></div>
<div class="a" style="left:51px;top:277px;width:40px;height:13px;border-top:1px solid #aaa"></div>
<div class="t" style="left:53px;top:279px;font-size:6.5px;line-height:8.5px;color:#fff;font-weight:bold;letter-spacing:-.2px">Power on T</div>
<div class="a" style="left:33px;top:289px;width:17px;height:12px;background:linear-gradient(#f4f4f4,#a8a8a8);border:1px solid #666"></div>
<div class="a" style="left:51px;top:289px;width:40px;height:13px;border-top:1px solid #aaa"></div>
<div class="t" style="left:53px;top:291px;font-size:6.5px;line-height:8.5px;color:#fff;font-weight:bold;letter-spacing:-.2px">Ambient Te</div>
<div class="a" style="left:33px;top:302px;width:17px;height:12px;background:linear-gradient(#f4f4f4,#a8a8a8);border:1px solid #666"></div>
<div class="a" style="left:51px;top:302px;width:40px;height:13px;border-top:1px solid #aaa"></div>
<div class="t" style="left:53px;top:304px;font-size:6.5px;line-height:8.5px;color:#fff;font-weight:bold;letter-spacing:-.2px">Voltage Val</div>
<div class="a" style="left:32px;top:314px;width:60px;height:1px;background:#aaa"></div>
<div class="a" style="left:21px;top:317px;width:78px;height:4px;background:#484848"></div>
<div class="a" style="left:24px;top:322px;width:49px;height:11px;background:#f08800;border:1px solid #fff"></div>
<div class="t" style="left:27px;top:323px;font-size:6px;line-height:8px;color:#fff;color:#000;font-weight:bold;letter-spacing:-.2px">Self-Diagnosis</div>
<div class="a" style="left:74px;top:322px;width:30px;height:11px;background:linear-gradient(#f4f4f4,#a8a8a8);border:1px solid #666"></div>
<div class="t" style="left:83px;top:321px;font-size:5px;line-height:7px;color:#fff;color:#000">In</div>
<div class="a" style="left:24px;top:335px;width:49px;height:11px;background:linear-gradient(#f4f4f4,#a8a8a8);border:1px solid #666"></div>
<div class="t" style="left:27px;top:336px;font-size:6px;line-height:8px;color:#fff;color:#000;letter-spacing:-.2px">Replace History</div>
<div class="a" style="left:74px;top:335px;width:30px;height:11px;background:linear-gradient(#f4f4f4,#a8a8a8);border:1px solid #666"></div>
<div class="t" style="left:78px;top:336px;font-size:6px;line-height:8px;color:#fff;color:#000">Tim</div>
<div class="t" style="left:83px;top:351px;font-size:18px;line-height:20px;color:#fff;font-family:Liberation Serif,serif">N</div>
<div class="a" style="left:20px;top:379px;width:80px;height:60px;background:#505050;border:1px solid #e0e0e0"></div>
<div class="a" style="left:21px;top:380px;width:78px;height:11px;background:#484848"></div>
<div class="a" style="left:21px;top:391px;width:78px;height:13px;background:#444 radial-gradient(#585858 25%,transparent 30%) 0 0/3px 3px"></div>
<div class="t" style="left:33px;top:383px;font-size:5.5px;line-height:7.5px;color:#fff;font-weight:bold">Self-Diagnosis</div>
<div class="a" style="left:23px;top:404px;width:70px;height:2px;background:#f08000"></div>
<div class="a" style="left:24px;top:406px;width:70px;height:40px;background:#6c6c6c"></div>
<div class="t" style="left:35px;top:406px;font-size:5px;line-height:7px;color:#fff;font-weight:bold">Equipment1</div>
<div class="a" style="left:30px;top:414px;width:65px;height:10px;background:#404040;border:1px solid #999"></div>
</div>
<div class="a" style="left:1111px;top:280px;width:17px;height:418px;background:#f0f0f0"></div>
<div class="a" style="left:1111px;top:298px;width:17px;height:285px;background:#cdcdcd"></div>
<svg style="left:1115px;top:286px" width="9" height="6" viewBox="0 0 9 6" ><path d="M1 5.500l3.500-3.800 3.500 3.800" fill="none" stroke="#606060" stroke-width="2"/></svg>
<svg style="left:1115px;top:687px" width="9" height="6" viewBox="0 0 9 6" ><path d="M1 .500l3.500 3.800 3.500-3.800" fill="none" stroke="#606060" stroke-width="2"/></svg>
<div class="a" style="left:1022px;top:698px;width:106px;height:18px;background:#f0f0f0"></div>
<div class="a" style="left:1040px;top:698px;width:22px;height:17px;background:#cdcdcd"></div>
<svg style="left:1028px;top:702px" width="6" height="9" viewBox="0 0 6 9" ><path d="M5.500 1l-3.800 3.500 3.800 3.500" fill="none" stroke="#606060" stroke-width="2"/></svg>
<svg style="left:1100px;top:702px" width="6" height="9" viewBox="0 0 6 9" ><path d="M.500 1l3.800 3.500-3.800 3.500" fill="none" stroke="#606060" stroke-width="2"/></svg>
<div class="a" style="left:1128px;top:280px;width:1px;height:436px;background:#fff"></div>
<div class="a" style="left:1130px;top:205px;width:1px;height:535px;background:#fff"></div>
<div class="a" style="left:1135px;top:188px;width:1px;height:553px;background:#909090"></div>
<div class="a" id="wm" style="left:812px;top:704px;width:319px;height:39px;overflow:hidden"><div class="t" style="left:3px;top:1px;font-size:28px;line-height:40px;color:#fff;text-shadow:2px 2px 0 #000,1px 1px 0 #000,2px 1px 0 #000,1px 2px 0 #000,3px 3px 2px rgba(0,0,0,.5)"><b>头条</b><span style="letter-spacing:1.3px"> @PLC与自控设备一</span></div></div>
<div class="a" id="dlg" style="left:257px;top:132px;width:624px;height:504px;background:#f0f0f0;border:1px solid #7a7a7a;border-right-color:#b0b0b0;border-bottom-color:#b0b0b0;box-shadow:0 2px 14px 2px rgba(0,0,0,.35)"></div>
<div class="a" style="left:258px;top:133px;width:622px;height:25px;background:#fff"></div>
<div class="t" id="dt" style="left:262px;top:137px;font-size:12px">SAP库通信地址设置</div>
<svg style="left:860px;top:140px" width="11" height="11" viewBox="0 0 11 11" ><path d="M0 0l10 10M10 0l-10 10" stroke="#000" stroke-width="1.100"/></svg>
<div class="a" style="left:266px;top:191px;width:607px;height:397px;border:1px solid;border-color:#fff #696969 #696969 #fff"></div>
<div class="a" style="left:267px;top:192px;width:605px;height:395px;border:1px solid;border-color:#f0f0f0 #a0a0a0 #a0a0a0 #f0f0f0"></div>
<div class="a" style="left:266px;top:168px;width:63px;height:24px;background:#f0f0f0;border:1px solid;border-color:#fff #696969 transparent #fff;border-bottom:none;border-radius:2px 2px 0 0"></div>
<div class="a" style="left:267px;top:169px;width:61px;height:23px;border-right:1px solid #a0a0a0"></div>
<div class="t" id="tab" style="left:273px;top:171px;font-size:12px">目标地址</div>
<div class="t" id="l1" style="left:281px;top:217px;font-size:12px">命令目标端口名称(S)</div>
<div class="sunk " style="left:577px;top:208px;width:279px;height:23px;"></div>
<div class="a" style="left:580px;top:211px;width:257px;height:18px;background:#0078d7"></div>
<div class="t" id="cb" style="left:581px;top:213px;font-size:12px;color:#fff">SERIALA</div>
<div class="btn3 " style="left:837px;top:210px;width:17px;height:19px;"></div>
<svg style="left:842px;top:219px" width="7" height="4" viewBox="0 0 7 4" shape-rendering="crispEdges"><path d="M0 0h7v1h-1v1h-1v1h-1v1h-1v-1h-1v-1h-1v-1h-1z" fill="#000"/></svg>
<div class="t" id="l2" style="left:281px;top:313px;font-size:12px;color:#838383">目标网络地址(N)</div>
<div class="sunk dis" style="left:577px;top:304px;width:122px;height:25px;"></div>
<div class="btn3 " style="left:681px;top:306px;width:16px;height:11px;"></div>
<div class="btn3 " style="left:681px;top:317px;width:16px;height:10px;"></div>
<svg style="left:686px;top:310px" width="5" height="3" viewBox="0 0 5 3" ><path d="M0 3l2.500-3 2.500 3z" fill="#a0a0a0"/></svg>
<svg style="left:686px;top:321px" width="5" height="3" viewBox="0 0 5 3" ><path d="M0 0l2.500 3 2.500-3z" fill="#a0a0a0"/></svg>
<div class="t" style="left:581px;top:308px;font-size:12px;color:#6d6d6d">0</div>
<div class="t" id="l3" style="left:281px;top:349px;font-size:12px;color:#838383">目标节点地址(O)</div>
<div class="sunk dis" style="left:577px;top:342px;width:122px;height:25px;"></div>
<div class="btn3 " style="left:681px;top:344px;width:16px;height:11px;"></div>
<div class="btn3 " style="left:681px;top:355px;width:16px;height:10px;"></div>
<svg style="left:686px;top:348px" width="5" height="3" viewBox="0 0 5 3" ><path d="M0 3l2.500-3 2.500 3z" fill="#a0a0a0"/></svg>
<svg style="left:686px;top:359px" width="5" height="3" viewBox="0 0 5 3" ><path d="M0 0l2.500 3 2.500-3z" fill="#a0a0a0"/></svg>
<div class="t" style="left:581px;top:346px;font-size:12px;color:#6d6d6d">0</div>
<div class="t" id="l4" style="left:281px;top:387px;font-size:12px">目标单元号(U)</div>
<div class="sunk " style="left:577px;top:380px;width:122px;height:25px;"></div>
<div class="btn3 " style="left:681px;top:382px;width:16px;height:11px;"></div>
<div class="btn3 " style="left:681px;top:393px;width:16px;height:10px;"></div>
<svg style="left:686px;top:386px" width="5" height="3" viewBox="0 0 5 3" ><path d="M0 3l2.500-3 2.500 3z" fill="#000"/></svg>
<svg style="left:686px;top:397px" width="5" height="3" viewBox="0 0 5 3" ><path d="M0 0l2.500 3 2.500-3z" fill="#000"/></svg>
<div class="t" style="left:581px;top:384px;font-size:12px;color:#000">4</div>
<div class="t" id="n1" style="left:281px;top:426px;font-size:12px">(根据您想用的单元输入以下值)</div>
<div class="t" id="n2" style="left:285px;top:443px;font-size:12px">CPU单元：0(固定)</div>
<div class="t" id="n3" style="left:285px;top:460px;font-size:12px;letter-spacing:.2px">CPU高功能单元：单元No.+16</div>
<div class="t" id="n4" style="left:285px;top:477px;font-size:12px;letter-spacing:.33px">高功能I/O单元：机器号+32</div>
<div class="sunk " style="left:281px;top:552px;width:13px;height:13px;"></div>
<div class="t" id="l5" style="left:299px;top:550px;font-size:12px;letter-spacing:.2px">DeviceNet从属地址(D)</div>
<div class="sunk dis" style="left:575px;top:544px;width:122px;height:25px;"></div>
<div class="btn3 " style="left:679px;top:546px;width:16px;height:11px;"></div>
<div class="btn3 " style="left:679px;top:557px;width:16px;height:10px;"></div>
<svg style="left:684px;top:550px" width="5" height="3" viewBox="0 0 5 3" ><path d="M0 3l2.500-3 2.500 3z" fill="#a0a0a0"/></svg>
<svg style="left:684px;top:561px" width="5" height="3" viewBox="0 0 5 3" ><path d="M0 0l2.500 3 2.500-3z" fill="#a0a0a0"/></svg>
<div class="t" style="left:579px;top:548px;font-size:12px;color:#6d6d6d">0</div>
<div class="a" style="left:597px;top:596px;width:88px;height:30px;border:1px solid #000;background:#f0f0f0"></div>
<div class="btn3 " style="left:598px;top:597px;width:86px;height:28px;"></div>
<div class="btn3 " style="left:691px;top:596px;width:88px;height:30px;"></div>
<div class="btn3 " style="left:785px;top:596px;width:88px;height:30px;"></div>
<div class="t" style="left:597px;top:603px;width:88px;text-align:center;font-size:12px">确定</div>
<div class="t" style="left:691px;top:603px;width:88px;text-align:center;font-size:12px;color:#a0a0a0;text-shadow:1px 1px 0 #fff">取消</div>
<div class="t" style="left:785px;top:603px;width:88px;text-align:center;font-size:12px">帮助</div>
</body>
</html>
